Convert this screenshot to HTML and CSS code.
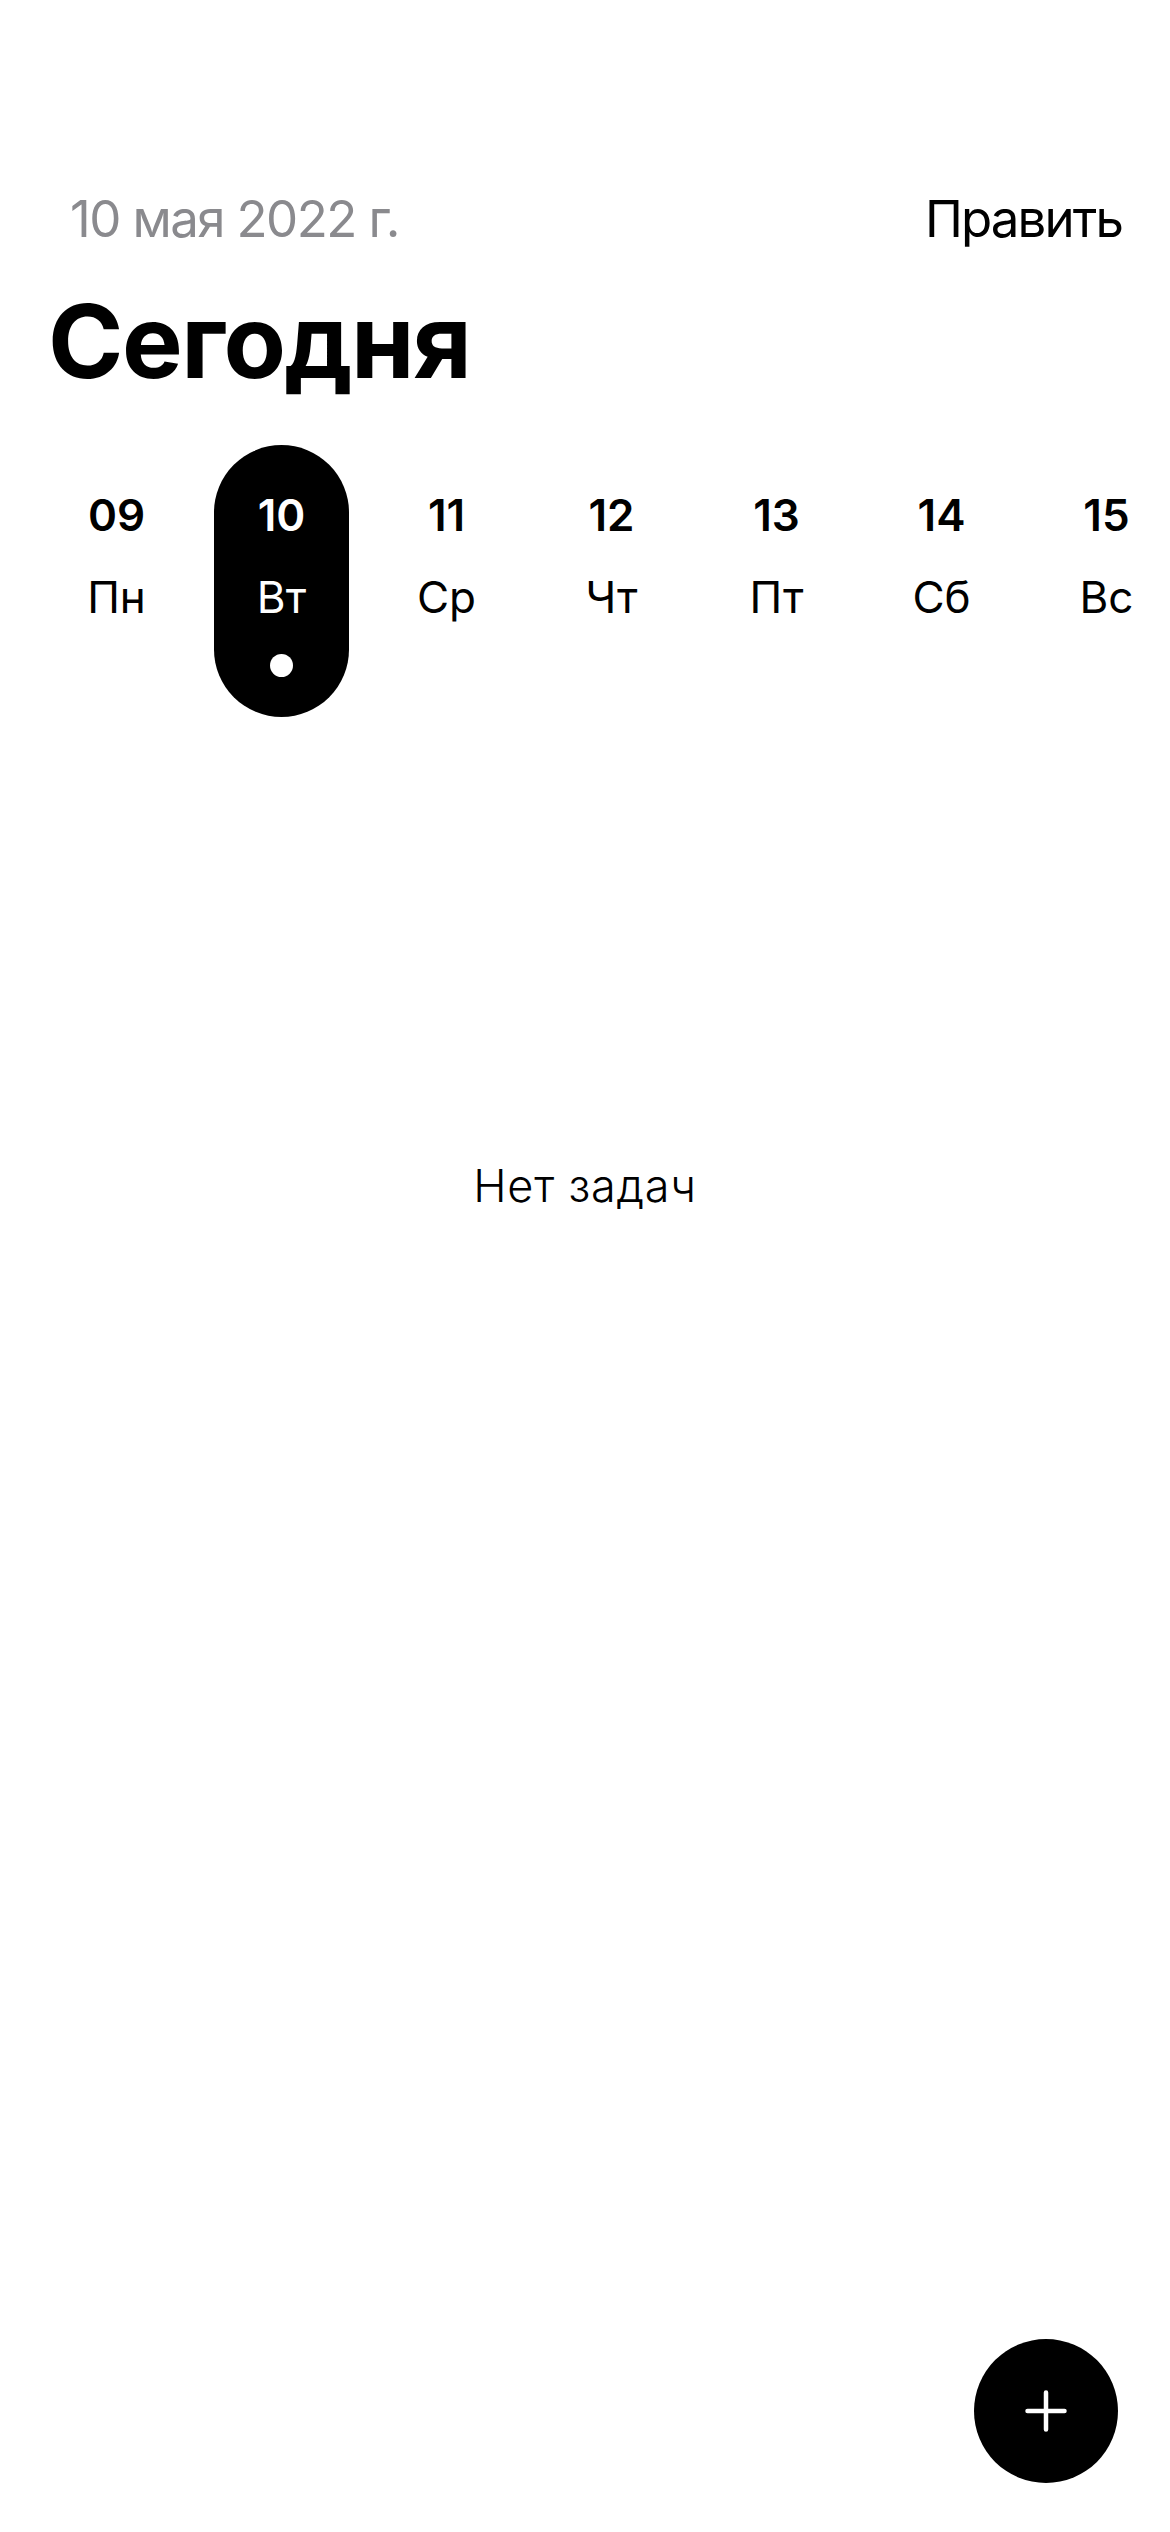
FILE: index.html
```html
<!DOCTYPE html>
<html lang="ru">
<head>
<meta charset="utf-8">
<title>Сегодня</title>
<link rel="stylesheet" href="styles.css">
</head>
<body>
<div class="screen">
  <header class="topbar">
    <span class="date">10 мая 2022 г.</span>
    <span class="edit">Править</span>
  </header>
  <h1 class="title">Сегодня</h1>
  <div class="week">
    <div class="day"><span class="num">09</span><span class="wd">Пн</span></div>
    <div class="day selected"><span class="num">10</span><span class="wd">Вт</span><span class="dot"></span></div>
    <div class="day"><span class="num">11</span><span class="wd">Ср</span></div>
    <div class="day"><span class="num">12</span><span class="wd">Чт</span></div>
    <div class="day"><span class="num">13</span><span class="wd">Пт</span></div>
    <div class="day"><span class="num">14</span><span class="wd">Сб</span></div>
    <div class="day"><span class="num">15</span><span class="wd">Вс</span></div>
  </div>
  <p class="empty">Нет задач</p>
  <button class="fab" aria-label="Добавить">
    <svg width="42" height="42" viewBox="0 0 42 42"><path d="M21 2.5V39.5M2.5 21H39.5" stroke="#fff" stroke-width="4.5" stroke-linecap="round" fill="none"/></svg>
  </button>
</div>
</body>
</html>
```
FILE: styles.css
```css
* { box-sizing: border-box; }
html, body { margin: 0; padding: 0; background: #fff; }
body {
  font-family: Inter, "Noto Sans", "Liberation Sans", sans-serif;
  color: #000;
}
.screen {
  position: relative;
  width: 1170px;
  height: 2532px;
  overflow: hidden;
  padding-top: 188px;
}
.topbar {
  display: flex;
  justify-content: space-between;
  align-items: baseline;
  padding: 0 48px 0 70px;
  font-size: 51px;
  line-height: 61px;
}
.date { color: #8a8a8e; letter-spacing: -1.6px; }
.edit { color: #000; letter-spacing: -1.9px; }
.title {
  margin: 31px 0 0 0;
  padding-left: 48px;
  font-size: 102px;
  line-height: 122px;
  font-weight: 700;
  letter-spacing: -1.5px;
}
.week {
  position: relative;
  z-index: 0;
  display: flex;
  margin-top: 43px;
  padding-left: 34px;
}
.day {
  position: relative;
  flex: 0 0 165px;
  display: flex;
  flex-direction: column;
  align-items: center;
}
.num, .wd {
  display: block;
  width: 135px;
  text-align: center;
  font-size: 44px;
  line-height: 54px;
}
.day .num { padding-top: 43px; font-weight: 600; }
.day .wd { margin-top: 28px; font-weight: 400; }
.selected .num, .selected .wd { color: #fff; }
.selected::before {
  content: "";
  position: absolute;
  top: 0;
  left: 15px;
  width: 135px;
  height: 272px;
  border-radius: 68px;
  background: #000;
  z-index: -1;
}
.dot {
  display: block;
  width: 23px;
  height: 23px;
  border-radius: 50%;
  background: #fff;
  margin-top: 30px;
}
.empty {
  margin: 482px 0 0 0;
  text-align: center;
  font-size: 45px;
  line-height: 54px;
  font-weight: 300;
  letter-spacing: 0.8px;
}
.fab {
  position: absolute;
  right: 52px;
  bottom: 49px;
  width: 144px;
  height: 144px;
  border-radius: 50%;
  border: 0;
  padding: 0;
  background: #000;
  display: flex;
  align-items: center;
  justify-content: center;
}
```
